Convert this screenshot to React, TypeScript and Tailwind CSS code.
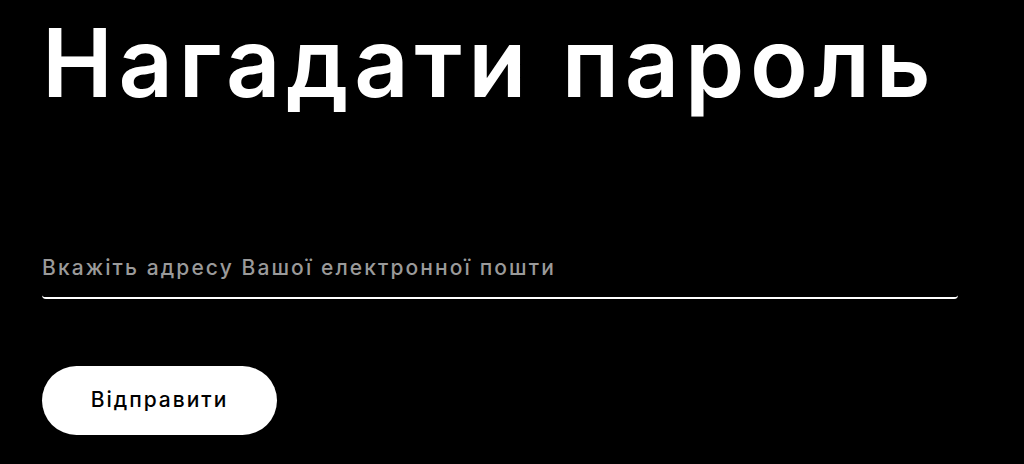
export default function App() {
  return (
    <div className="w-[1024px] h-[464px] bg-black overflow-hidden" style={{ fontFamily: 'Inter, "Noto Sans", sans-serif' }}>
      <div className="pl-[42px] pr-[66px]">
        <h1 className="text-white text-[95px] leading-none font-semibold tracking-[0.06em] pt-[15px]">Нагадати пароль</h1>
        <div className="mt-[142px]">
          <input
            type="email"
            placeholder="Вкажіть адресу Вашої електронної пошти"
            className="w-full bg-transparent text-white text-[21px] font-medium tracking-[0.1em] pb-[13px] border-b-2 border-white rounded-b-[4px] outline-none placeholder:text-[#9a9a9a]"
          />
        </div>
        <button className="mt-[67px] w-[235px] h-[69px] rounded-full bg-white text-black text-[21px] font-medium tracking-[0.095em]">
          Відправити
        </button>
      </div>
    </div>
  );
}
